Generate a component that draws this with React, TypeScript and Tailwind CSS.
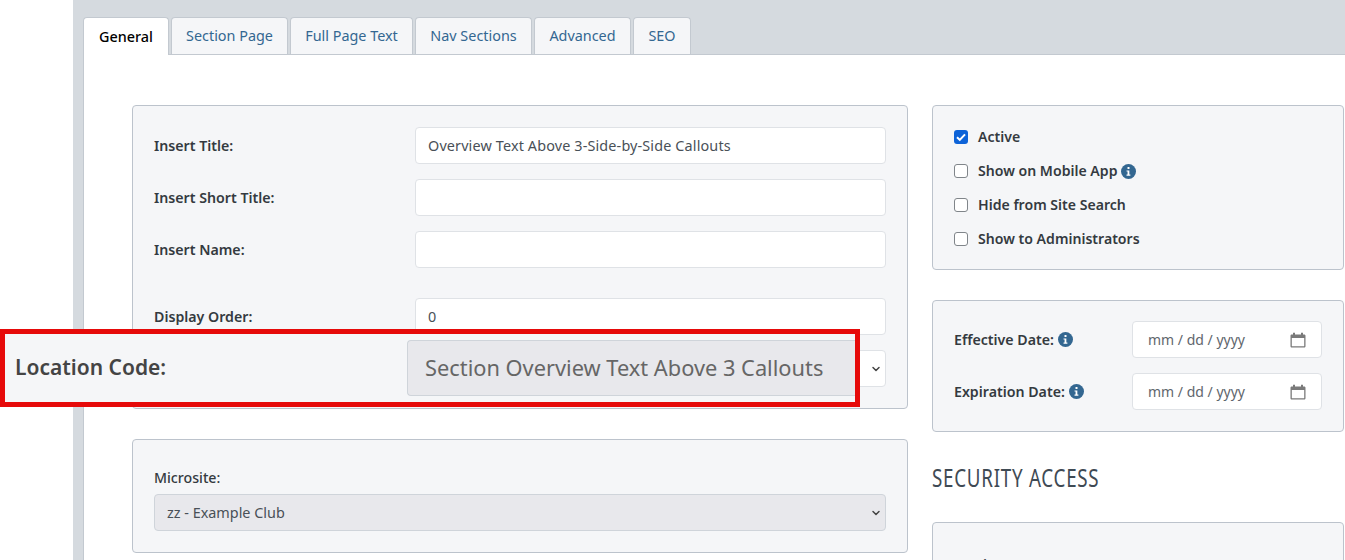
import { ChevronDown } from "lucide-react";

const sans = "font-['Noto_Sans','Open_Sans',sans-serif]";
const field = "h-[37px] w-[471px] rounded-[4px] border border-[#dfe2e6] bg-white px-3 text-[14.4px] tracking-[0.14px] text-[#495057] flex items-center";

const tabs = [
  { label: "Section Page", width: "w-[117px]" },
  { label: "Full Page Text", width: "w-[123px]" },
  { label: "Nav Sections", width: "w-[117px]" },
  { label: "Advanced", width: "w-[97px]" },
  { label: "SEO", width: "w-[58px]" },
];

function InfoIcon() {
  return (
    <svg viewBox="0 0 16 16" className="h-[15px] w-[15px] shrink-0">
      <circle cx="8" cy="8" r="8" fill="#336791" />
      <rect x="6.9" y="3.2" width="2.2" height="2.2" rx="0.6" fill="#fff" />
      <path d="M5.9 6.8h3v4.4h1.1v1.3H5.9v-1.3H7V8.1H5.9z" fill="#fff" />
    </svg>
  );
}

function CalendarIcon() {
  return (
    <svg viewBox="0 0 16 16" className="h-[16px] w-[16px]" fill="#7a7a7a">
      <path d="M3 .8h2v1.6h6V.8h2v1.6h1.2c.8 0 1.3.6 1.3 1.3v10.6c0 .8-.6 1.3-1.3 1.3H1.8c-.8 0-1.3-.6-1.3-1.3V3.7c0-.8.6-1.3 1.3-1.3H3zM1.8 6v8.1c0 .1.1.2.2.2h12c.1 0 .2-.1.2-.2V6z" />
    </svg>
  );
}

function Row({ label, value, mb }: { label: string; value?: string; mb: string }) {
  return (
    <div className={`flex items-center justify-between ${mb}`}>
      <span className="text-[14.2px] font-semibold text-[#343a40]">{label}</span>
      <div className={field}>{value}</div>
    </div>
  );
}

function Check({ label, checked, info }: { label: string; checked?: boolean; info?: boolean }) {
  return (
    <div className="flex h-[34px] items-center">
      {checked ? (
        <span className="flex h-[14px] w-[14px] items-center justify-center rounded-[3px] bg-[#0d63d8]">
          <svg viewBox="0 0 14 14" className="h-[14px] w-[14px]" fill="none" stroke="#fff" strokeWidth="2">
            <path d="M3 7.2l2.8 2.7L11 4.4" />
          </svg>
        </span>
      ) : (
        <span className="h-[14px] w-[14px] rounded-[3px] border border-[#80858a] bg-white" />
      )}
      <span className="ml-[10px] mr-[3px] pb-[1px] text-[14.1px] font-semibold text-[#343a40]">{label}</span>
      {info && <InfoIcon />}
    </div>
  );
}

function DateRow({ label, mb }: { label: string; mb?: string }) {
  return (
    <div className={`flex items-center justify-between ${mb ?? ""}`}>
      <span className="flex items-center gap-[4px] text-[14.2px] font-semibold text-[#343a40]">
        {label}
        <InfoIcon />
      </span>
      <div className="flex h-[37px] w-[190px] items-center justify-between rounded-[4px] border border-[#dfe2e6] bg-white pl-[15px] pr-[15px] text-[14px] text-[#5f666d]">
        <span>mm / dd / yyyy</span>
        <CalendarIcon />
      </div>
    </div>
  );
}

export default function App() {
  return (
    <div className={`relative flex h-[560px] w-[1345px] overflow-hidden bg-white ${sans}`}>
      <div className="w-[73px] shrink-0" />
      <div className="flex-1 bg-[#d5dadf] pl-[10px] pt-[17px]">
        <div className="flex items-end">
          <div className="z-10 -mb-px flex h-[38px] w-[86px] items-center justify-center rounded-t-[4px] border border-b-0 border-[#c3c9d0] bg-white text-[14.4px] font-medium text-black">
            General
          </div>
          {tabs.map((t) => (
            <div
              key={t.label}
              className={`ml-[2px] flex h-[37px] items-center justify-center rounded-t-[4px] border border-b-0 border-[#c3c9d0] bg-[#f5f6f8] pb-[1px] text-[14.4px] text-[#336791] ${t.width}`}
            >
              {t.label}
            </div>
          ))}
        </div>
        <div className="flex h-[600px] items-start gap-[24px] border-t border-l border-[#c3c9d0] bg-white pl-[48px] pt-[50px]">
          <div className="w-[776px]">
            <div className="h-[304px] rounded-[4px] border border-[#bcc3cc] bg-[#f5f6f8] pl-[21px] pr-[21px] pt-[21px]">
              <Row label="Insert Title:" value="Overview Text Above 3-Side-by-Side Callouts" mb="mb-[15px]" />
              <Row label="Insert Short Title:" mb="mb-[15px]" />
              <Row label="Insert Name:" mb="mb-[30px]" />
              <Row label="Display Order:" value="0" mb="mb-[15px]" />
              <div className="flex items-center justify-end">
                <div className={`${field} justify-end bg-[#e8e8ec] pr-[3px] border-[#cfd4da]`}>
                  <ChevronDown strokeWidth={3} className="h-[12px] w-[12px] text-[#444]" />
                </div>
              </div>
            </div>
            <div className="mt-[30px] h-[114px] rounded-[4px] border border-[#bcc3cc] bg-[#f5f6f8] px-[21px] pt-[27px]">
              <div className="mb-[6px] text-[14.2px] font-medium text-[#343a40]">Microsite:</div>
              <div className="flex h-[37px] items-center justify-between rounded-[4px] border border-[#cfd4da] bg-[#e8e8ec] pl-[12px] pr-[3px] text-[14.4px] text-[#495057]">
                zz - Example Club
                <ChevronDown strokeWidth={3} className="h-[12px] w-[12px] text-[#444]" />
              </div>
            </div>
          </div>
          <div className="w-[412px] shrink-0">
            <div className="h-[165px] rounded-[4px] border border-[#bcc3cc] bg-[#f5f6f8] pl-[21px] pt-[14px]">
              <Check label="Active" checked />
              <Check label="Show on Mobile App" info />
              <Check label="Hide from Site Search" />
              <Check label="Show to Administrators" />
            </div>
            <div className="mt-[30px] h-[132px] rounded-[4px] border border-[#bcc3cc] bg-[#f5f6f8] px-[21px] pt-[20px]">
              <DateRow label="Effective Date:" mb="mb-[15px]" />
              <DateRow label="Expiration Date:" />
            </div>
            <h2 className="mt-[28px] h-[62px] origin-left scale-x-[0.75] whitespace-nowrap text-[25px] font-normal leading-[34px] tracking-[1px] text-[#3f4a54]">
              SECURITY ACCESS
            </h2>
            <div className="h-[100px] rounded-[4px] border border-[#bcc3cc] bg-[#f5f6f8] pl-[21px] pt-[31px] text-[14.2px] font-semibold text-[#343a40]">
              Section Access
            </div>
          </div>
        </div>
      </div>
      <div className="absolute left-0 top-[329px] flex h-[78px] w-[860px] items-center border-[5px] border-[#e60a0a] bg-[#f5f6f8] pl-[10px]">
        <span className="w-[392px] pb-[1px] text-[21px] font-semibold text-[#444]">Location Code:</span>
        <div className="ml-px flex h-[56px] w-[449px] items-center rounded-l-[4px] border border-r-0 border-[#cfd4da] bg-[#e8e8ec] pl-[17px] text-[21.8px] text-[#666]">
          Section Overview Text Above 3 Callouts
        </div>
      </div>
    </div>
  );
}
